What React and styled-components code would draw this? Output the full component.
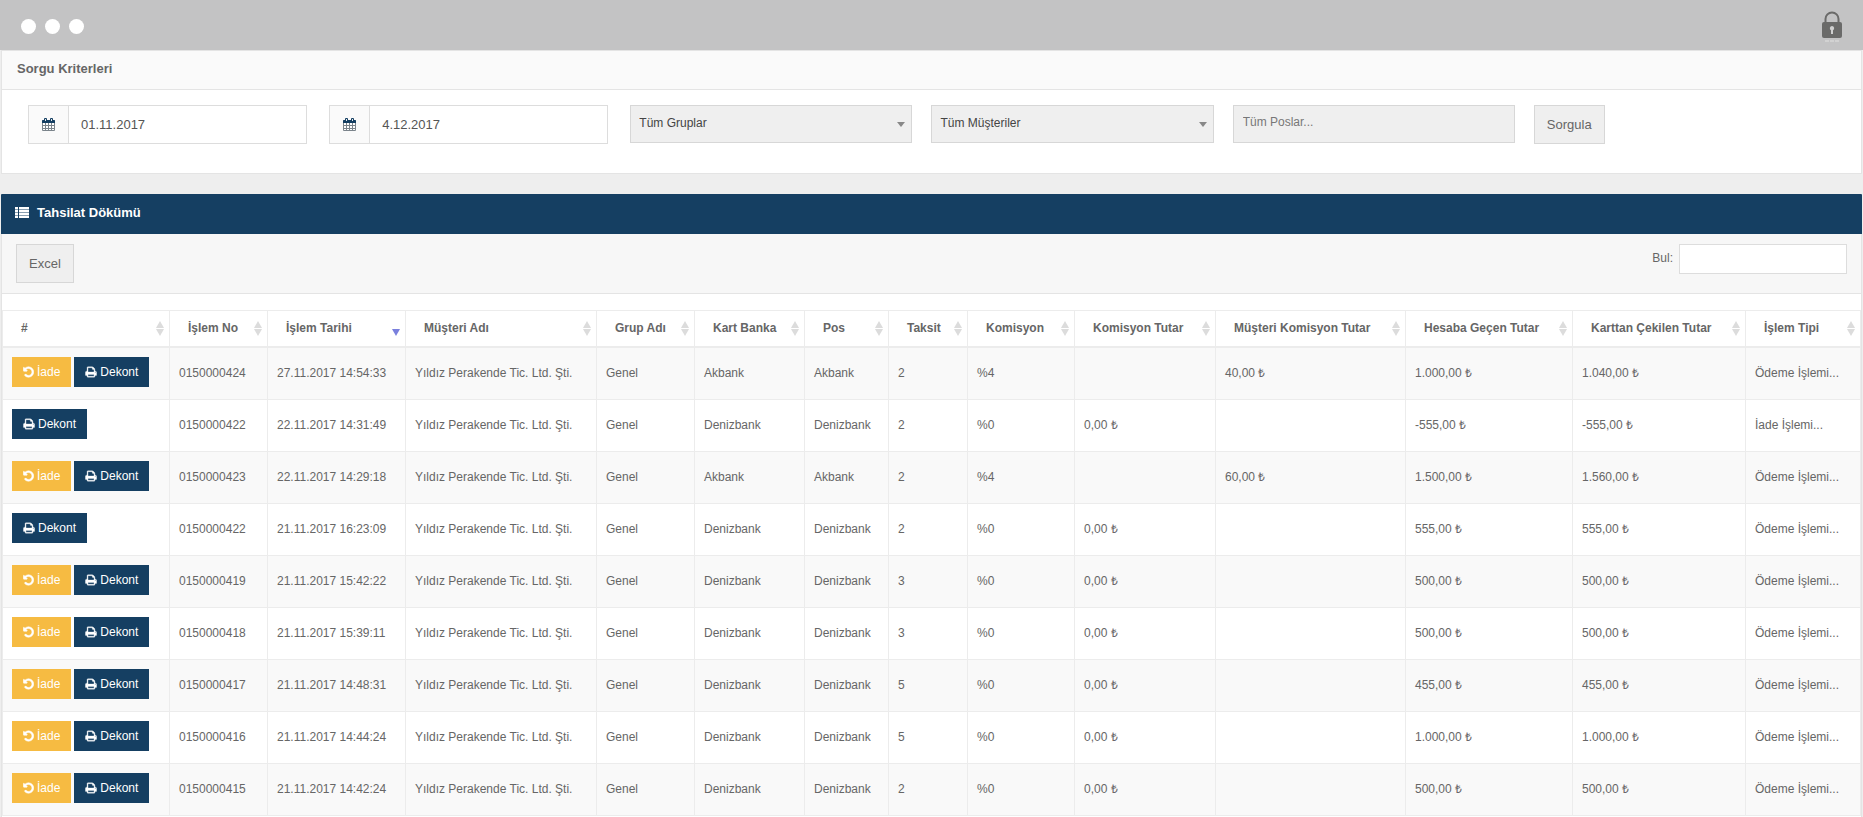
import React from "react";
import styled, { createGlobalStyle } from "styled-components";

const columns = [
    { title: "#", width: 167 },
    { title: "İşlem No", width: 98 },
    { title: "İşlem Tarihi", width: 138, sorted: true },
    { title: "Müşteri Adı", width: 191 },
    { title: "Grup Adı", width: 98 },
    { title: "Kart Banka", width: 110 },
    { title: "Pos", width: 84 },
    { title: "Taksit", width: 79 },
    { title: "Komisyon", width: 107 },
    { title: "Komisyon Tutar", width: 141 },
    { title: "Müşteri Komisyon Tutar", width: 190 },
    { title: "Hesaba Geçen Tutar", width: 167 },
    { title: "Karttan Çekilen Tutar", width: 173 },
    { title: "İşlem Tipi", width: 115 },
];

const payments = [
    { no: "0150000424", date: "27.11.2017 14:54:33", bank: "Akbank", taksit: "2", rate: "%4", fee: "", customerFee: "40,00 ₺", net: "1.000,00 ₺", total: "1.040,00 ₺", type: "Ödeme İşlemi..." },
    { no: "0150000422", date: "22.11.2017 14:31:49", bank: "Denizbank", taksit: "2", rate: "%0", fee: "0,00 ₺", customerFee: "", net: "-555,00 ₺", total: "-555,00 ₺", type: "İade İşlemi...", noRefund: true },
    { no: "0150000423", date: "22.11.2017 14:29:18", bank: "Akbank", taksit: "2", rate: "%4", fee: "", customerFee: "60,00 ₺", net: "1.500,00 ₺", total: "1.560,00 ₺", type: "Ödeme İşlemi..." },
    { no: "0150000422", date: "21.11.2017 16:23:09", bank: "Denizbank", taksit: "2", rate: "%0", fee: "0,00 ₺", customerFee: "", net: "555,00 ₺", total: "555,00 ₺", type: "Ödeme İşlemi...", noRefund: true },
    { no: "0150000419", date: "21.11.2017 15:42:22", bank: "Denizbank", taksit: "3", rate: "%0", fee: "0,00 ₺", customerFee: "", net: "500,00 ₺", total: "500,00 ₺", type: "Ödeme İşlemi..." },
    { no: "0150000418", date: "21.11.2017 15:39:11", bank: "Denizbank", taksit: "3", rate: "%0", fee: "0,00 ₺", customerFee: "", net: "500,00 ₺", total: "500,00 ₺", type: "Ödeme İşlemi..." },
    { no: "0150000417", date: "21.11.2017 14:48:31", bank: "Denizbank", taksit: "5", rate: "%0", fee: "0,00 ₺", customerFee: "", net: "455,00 ₺", total: "455,00 ₺", type: "Ödeme İşlemi..." },
    { no: "0150000416", date: "21.11.2017 14:44:24", bank: "Denizbank", taksit: "5", rate: "%0", fee: "0,00 ₺", customerFee: "", net: "1.000,00 ₺", total: "1.000,00 ₺", type: "Ödeme İşlemi..." },
    { no: "0150000415", date: "21.11.2017 14:42:24", bank: "Denizbank", taksit: "2", rate: "%0", fee: "0,00 ₺", customerFee: "", net: "500,00 ₺", total: "500,00 ₺", type: "Ödeme İşlemi..." },
];

export default function App(){
    return(
        <Page>
            <GlobalStyle/>
            <WindowBar>
                <Dots>
                    <Dot/>
                    <Dot/>
                    <Dot/>
                </Dots>
                <LockIcon/>
            </WindowBar>

            <Content>
                <Filters/>
                <Payments/>
            </Content>
        </Page>
    )
}

function Filters(){
    return(
        <Panel>
            <PanelTitle>Sorgu Kriterleri</PanelTitle>
            <FilterRow>
                <DateField id="start" label="Başlangıç tarihi" value="01.11.2017"/>
                <DateField id="end" label="Bitiş tarihi" value="4.12.2017"/>
                <FilterCell>
                    <SelectBox>
                        <Select aria-label="Gruplar">
                            <option>Tüm Gruplar</option>
                        </Select>
                        <Caret/>
                    </SelectBox>
                </FilterCell>
                <FilterCell>
                    <SelectBox>
                        <Select aria-label="Müşteriler">
                            <option>Tüm Müşteriler</option>
                        </Select>
                        <Caret/>
                    </SelectBox>
                </FilterCell>
                <FilterCell>
                    <PosInput aria-label="Poslar" placeholder="Tüm Poslar..."/>
                </FilterCell>
                <FilterCell>
                    <Button type="button">Sorgula</Button>
                </FilterCell>
            </FilterRow>
        </Panel>
    )
}

function DateField({ id, label, value }){
    return(
        <DateCell>
            <DateGroup>
                <DateAddon htmlFor={id} aria-label={label}>
                    <CalendarIcon/>
                </DateAddon>
                <DateInput id={id} defaultValue={value}/>
            </DateGroup>
        </DateCell>
    )
}

function Payments(){
    return(
        <TablePanel>
            <TableTitle>
                <ListIcon/>
                <h2>Tahsilat Dökümü</h2>
            </TableTitle>

            <Toolbar>
                <Button type="button">Excel</Button>
                <Search>
                    <span>Bul:</span>
                    <input type="search"/>
                </Search>
            </Toolbar>

            <Table>
                <colgroup>
                    {columns.map((c) => <Col key={c.title} $width={c.width}/>)}
                </colgroup>
                <thead>
                    <tr>
                        {columns.map((c) => (
                            <th key={c.title}>
                                <Heading>
                                    <span>{c.title}</span>
                                    <SortIcon sorted={c.sorted}/>
                                </Heading>
                            </th>
                        ))}
                    </tr>
                </thead>
                <tbody>
                    {payments.map((p) => (
                        <tr key={p.date}>
                            <td>
                                <Actions>
                                    {p.noRefund ? null : <ActionButton $color="#f6bb42"><UndoIcon/>İade</ActionButton>}
                                    <ActionButton $color="#153f62"><PrintIcon/>Dekont</ActionButton>
                                </Actions>
                            </td>
                            <td>{p.no}</td>
                            <td>{p.date}</td>
                            <td>Yıldız Perakende Tic. Ltd. Şti.</td>
                            <td>Genel</td>
                            <td>{p.bank}</td>
                            <td>{p.bank}</td>
                            <td>{p.taksit}</td>
                            <td>{p.rate}</td>
                            <td>{p.fee}</td>
                            <td>{p.customerFee}</td>
                            <td>{p.net}</td>
                            <td>{p.total}</td>
                            <td>{p.type}</td>
                        </tr>
                    ))}
                </tbody>
            </Table>
        </TablePanel>
    )
}

/* ICONS */

function LockIcon(){
    return(
        <svg width="20" height="32" viewBox="0 0 20 32">
            <path d="M3.5 12V8a6.5 6.5 0 0 1 13 0v4" fill="none" stroke="#6a6a69" strokeWidth="2"/>
            <rect y="11" width="20" height="16" rx="2" fill="#6a6a69"/>
            <path d="M10 15a2.300 2.300 0 0 1 1 4.300V23H9v-3.700A2.300 2.300 0 0 1 10 15z" fill="#d0d0d0"/>
            <path d="M3 30h14" stroke="#d2d2d2" strokeWidth="2" strokeDasharray="4 1"/>
        </svg>
    )
}

function CalendarIcon(){
    return(
        <svg width="13" height="13" viewBox="0 0 13 13">
            <rect y="2" width="13" height="11" rx="1" fill="#7b848b"/>
            <path d="M0 3a1 1 0 0 1 1-1h11a1 1 0 0 1 1 1v2H0z" fill="#153f62"/>
            <path d="M1 5h2v2H1zM4 5h2v2H4zM7 5h2v2H7zM10 5h2v2h-2zM1 8h2v2H1zM4 8h2v2H4zM7 8h2v2H7zM10 8h2v2h-2zM1 11h2v1H1zM4 11h2v1H4zM7 11h2v1H7zM10 11h2v1h-2z" fill="#ffffff"/>
            <rect x="2" width="3" height="4" rx="1" fill="#153f62"/>
            <rect x="8" width="3" height="4" rx="1" fill="#153f62"/>
            <path d="M3.500 1v2M9.500 1v2" stroke="#e4e8eb" strokeWidth="1"/>
        </svg>
    )
}

function ListIcon(){
    return(
        <svg width="14" height="11" viewBox="0 0 14 11" fill="#ffffff">
            <path d="M0 0h3v11H0zM4 0h10v11H4z" opacity="0.5"/>
            <path d="M0 0h3v2H0zM4 0h10v2H4zM0 3h3v2H0zM4 3h10v2H4zM0 6h3v2H0zM4 6h10v2H4zM0 9h3v2H0zM4 9h10v2H4z"/>
        </svg>
    )
}

function UndoIcon(){
    return(
        <svg width="11" height="12" viewBox="128 0 1536 1792" fill="#ffffff" stroke="#ffffff" strokeWidth="90">
            <path d="M1664 896q0 156-61 298t-164 245-245 164-298 61q-172 0-327-72.500t-264-204.500q-7-10-6.500-22.500t8.500-20.500l137-138q10-9 25-9 16 2 23 12 73 95 179 147t225 52q104 0 198.500-40.500t163.500-109.500 109.500-163.500 40.500-198.500-40.500-198.500-109.500-163.500-163.500-109.500-198.500-40.500q-98 0-188 35.500t-160 101.500l137 138q31 30 14 69-17 40-59 40h-448q-26 0-45-19t-19-45v-448q0-42 40-59 39-17 69 14l130 129q107-101 244.500-156.500t284.500-55.500q156 0 298 61t245 164 164 245 61 298z"/>
        </svg>
    )
}

function PrintIcon(){
    return(
        <svg width="12" height="12" viewBox="0 0 1792 1792" fill="#ffffff" stroke="#ffffff" strokeWidth="50">
            <path d="M448 1536h896v-256h-896v256zm0-640h896v-384h-160q-40 0-68-28t-28-68v-160h-640v640zm1152 64q0-26-19-45t-45-19-45 19-19 45 19 45 45 19 45-19 19-45zm128 0v416q0 13-9.500 22.500t-22.500 9.500h-224v160q0 40-28 68t-68 28h-960q-40 0-68-28t-28-68v-160h-224q-13 0-22.500-9.500t-9.500-22.500v-416q0-79 56.500-135.500t135.500-56.500h64v-544q0-40 28-68t68-28h672q40 0 88 20t76 48l152 152q28 28 48 76t20 88v256h64q79 0 135.500 56.500t56.500 135.500z"/>
        </svg>
    )
}

function SortIcon({ sorted }){
    return(
        <svg width="8" height="15" viewBox="0 0 8 15">
            {sorted ? null : <path d="M0 7L4 0L8 7z" fill="#dcdcdc"/>}
            <path d="M0 8L4 15L8 8z" fill={sorted ? "#7a80dd" : "#dcdcdc"}/>
        </svg>
    )
}


const GlobalStyle = createGlobalStyle`
  * {
    box-sizing: border-box;
  }

  body {
    margin: 0;
    background-color: #eeeeee;
    color: #666666;
    font-family: "Liberation Sans", Arial, sans-serif;
    font-size: 12px;
  }

  button, input, select {
    font-family: inherit;
    margin: 0;
    border-radius: 0;
    outline: none;
  }

  svg {
    display: block;
    flex-shrink: 0;
  }
`

const Page = styled.div`
  min-height: 100vh;
  display: flex;
  flex-direction: column;
`

const WindowBar = styled.header`
  height: 50px;
  padding: 3px 21px 0;
  background-color: #c3c3c4;

  display: flex;
  justify-content: space-between;
  align-items: center;
`

const Dots = styled.div`
  display: flex;
  gap: 9px;
`

const Dot = styled.span`
  width: 15px;
  height: 15px;
  border-radius: 50%;
  background-color: #ffffff;
`

const Content = styled.main`
  flex: 1;
  padding: 0 1px;

  display: flex;
  flex-direction: column;
  gap: 20px;
`

const Panel = styled.section`
  border: 1px solid #e4e4e4;
  background-color: #ffffff;
`

const PanelTitle = styled.h2`
  height: 39px;
  margin: 0;
  padding: 9px 15px;
  border-bottom: 1px solid #e4e4e4;
  background-color: #fafafa;

  font-size: 13px;
  line-height: 17px;
`

const FilterRow = styled.form`
  padding: 15px 36px 29px 16px;

  display: grid;
  grid-template-columns: repeat(6, 1fr);
`

const FilterCell = styled.div`
  padding: 0 9px 0 10px;
`

const DateCell = styled.div`
  padding: 0 12px 0 10px;
`

const DateGroup = styled.div`
  height: 39px;
  border: 1px solid #dddddd;
  display: flex;
`

const DateAddon = styled.label`
  width: 40px;
  border-right: 1px solid #dddddd;
  background-color: #fafafa;

  display: flex;
  justify-content: center;
  align-items: center;
`

const DateInput = styled.input`
  flex: 1;
  min-width: 0;
  padding: 0 12px;
  border: none;
  color: #555555;
  font-size: 13px;
`

const SelectBox = styled.div`
  height: 38px;
  border: 1px solid #d7d7d7;
  background-color: #efefef;

  display: grid;
  grid-template-columns: 1fr 14px;
  align-items: center;
`

const Select = styled.select`
  grid-area: 1 / 1 / 2 / 3;
  width: 100%;
  height: 36px;
  padding: 0 24px 2px 8px;
  border: none;
  background: none;
  appearance: none;
  color: #444444;
  font-size: 12px;
`

const Caret = styled.span`
  grid-area: 1 / 2;
  border: 4px solid transparent;
  border-top: 5px solid #888888;
  border-bottom: none;
  justify-self: start;
  pointer-events: none;
`

const PosInput = styled.input`
  width: 100%;
  height: 38px;
  padding: 0 9px 4px;
  border: 1px solid #d7d7d7;
  background-color: #efefef;
  font-size: 12px;

  &::placeholder {
    color: #777777;
    opacity: 1;
  }
`

const Button = styled.button`
  height: 39px;
  padding: 0 12px;
  border: 1px solid #d7d7d7;
  background-color: #efefef;
  color: #666666;
  font-size: 13px;
`

const TablePanel = styled.section`
  flex: 1;
  border: 1px solid #e4e4e4;
  border-width: 0 1px;
  background-color: #ffffff;
`

const TableTitle = styled.div`
  height: 40px;
  margin: 0 -1px;
  padding: 0 14px 4px;
  border-radius: 1px 1px 0 0;
  background-color: #153f62;
  color: #ffffff;

  display: flex;
  align-items: center;
  gap: 8px;

  h2 {
    margin: 0;
    font-size: 13px;
  }
`

const Toolbar = styled.div`
  height: 60px;
  padding: 10px 14px;
  border-bottom: 1px solid #e4e4e4;
  background-color: #f7f7f7;

  display: flex;
  justify-content: space-between;
  align-items: flex-start;
`

const Search = styled.label`
  display: flex;
  align-items: center;
  gap: 6px;

  span {
    padding-bottom: 2px;
  }

  input {
    width: 168px;
    height: 30px;
    border: 1px solid #dddddd;
    background-color: #ffffff;
  }
`

const Table = styled.table`
  width: 100%;
  margin-top: 16px;
  border-left: 1px solid #ececec;
  border-top: 1px solid #ececec;
  border-spacing: 0;
  table-layout: fixed;

  th, td {
    border-right: 1px solid #ececec;
    border-bottom: 1px solid #ececec;
    text-align: left;
    white-space: nowrap;
  }

  th {
    height: 37px;
    padding: 0 5px 0 18px;
    border-bottom-width: 2px;
  }

  td {
    height: 52px;
    padding: 0 9px 2px;
  }

  tbody tr:nth-child(odd) {
    background-color: #f9f9f9;
  }
`

const Col = styled.col`
  width: ${(props) => props.$width}px;
`

const Heading = styled.div`
  display: flex;
  justify-content: space-between;
  align-items: center;

  span {
    padding-bottom: 2px;
  }
`

const Actions = styled.div`
  padding-bottom: 1px;
  display: flex;
  gap: 3px;
`

const ActionButton = styled.button`
  height: 30px;
  padding: 0 11px;
  border: none;
  background-color: ${(props) => props.$color};
  color: #ffffff;
  font-size: 12px;

  display: flex;
  align-items: center;
  gap: 3px;
`
